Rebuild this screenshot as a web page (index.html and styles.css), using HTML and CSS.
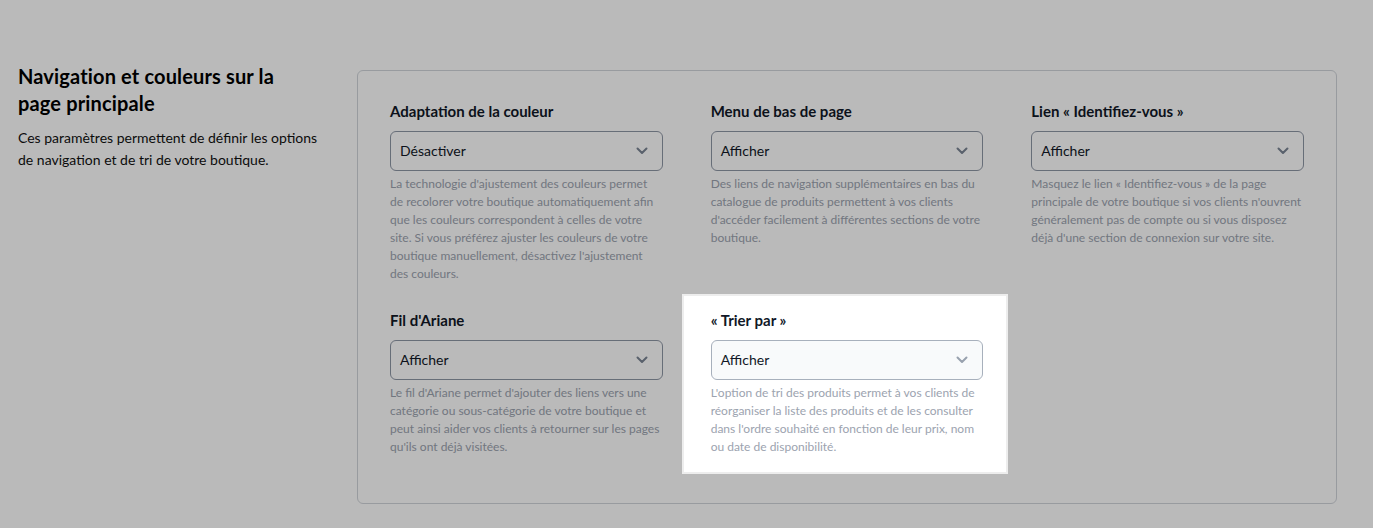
FILE: index.html
```html
<!DOCTYPE html>
<html lang="fr">
<head>
<meta charset="utf-8">
<title>Navigation et couleurs</title>
<link rel="stylesheet" href="styles.css">
</head>
<body>
<div class="page">
  <div class="intro">
    <h2 class="intro-title">Navigation et couleurs sur la page principale</h2>
    <p class="intro-text">Ces paramètres permettent de définir les options de navigation et de tri de votre boutique.</p>
  </div>
  <div class="card">
    <div class="grid">
      <div class="field">
        <div class="field-title">Adaptation de la couleur</div>
        <div class="select"><span>Désactiver</span><svg class="chev" width="12" height="8" viewBox="0 0 12 8"><path d="M1.5 1.5 6 6l4.5-4.5" fill="none" stroke="currentColor" stroke-width="2" stroke-linecap="round" stroke-linejoin="round"/></svg></div>
        <p class="field-desc">La technologie d'ajustement des couleurs permet de recolorer votre boutique automatiquement afin que les couleurs correspondent à celles de votre site. Si vous préférez ajuster les couleurs de votre boutique manuellement, désactivez l'ajustement des couleurs.</p>
      </div>
      <div class="field">
        <div class="field-title">Menu de bas de page</div>
        <div class="select"><span>Afficher</span><svg class="chev" width="12" height="8" viewBox="0 0 12 8"><path d="M1.5 1.5 6 6l4.5-4.5" fill="none" stroke="currentColor" stroke-width="2" stroke-linecap="round" stroke-linejoin="round"/></svg></div>
        <p class="field-desc">Des liens de navigation supplémentaires en bas du catalogue de produits permettent à vos clients d'accéder facilement à différentes sections de votre boutique.</p>
      </div>
      <div class="field">
        <div class="field-title">Lien « Identifiez-vous »</div>
        <div class="select"><span>Afficher</span><svg class="chev" width="12" height="8" viewBox="0 0 12 8"><path d="M1.5 1.5 6 6l4.5-4.5" fill="none" stroke="currentColor" stroke-width="2" stroke-linecap="round" stroke-linejoin="round"/></svg></div>
        <p class="field-desc">Masquez le lien « Identifiez-vous » de la page principale de votre boutique si vos clients n'ouvrent généralement pas de compte ou si vous disposez déjà d'une section de connexion sur votre site.</p>
      </div>
      <div class="field">
        <div class="field-title">Fil d'Ariane</div>
        <div class="select"><span>Afficher</span><svg class="chev" width="12" height="8" viewBox="0 0 12 8"><path d="M1.5 1.5 6 6l4.5-4.5" fill="none" stroke="currentColor" stroke-width="2" stroke-linecap="round" stroke-linejoin="round"/></svg></div>
        <p class="field-desc">Le fil d'Ariane permet d'ajouter des liens vers une catégorie ou sous-catégorie de votre boutique et peut ainsi aider vos clients à retourner sur les pages qu'ils ont déjà visitées.</p>
      </div>
      <div class="field field-spotlight">
        <div class="field-title">« Trier par »</div>
        <div class="select select-light"><span>Afficher</span><svg class="chev" width="12" height="8" viewBox="0 0 12 8"><path d="M1.5 1.5 6 6l4.5-4.5" fill="none" stroke="currentColor" stroke-width="2" stroke-linecap="round" stroke-linejoin="round"/></svg></div>
        <p class="field-desc">L'option de tri des produits permet à vos clients de réorganiser la liste des produits et de les consulter dans l'ordre souhaité en fonction de leur prix, nom ou date de disponibilité.</p>
      </div>
    </div>
  </div>
</div>
</body>
</html>
```
FILE: styles.css
```css
* { box-sizing: border-box; }
html, body { margin: 0; padding: 0; }
body {
  background: #ffffff;
  font-family: Lato, "Noto Sans", sans-serif;
  color: #111827;
  height: 528px;
  overflow: hidden;
}
.page {
  display: flex;
  gap: 37px;
  padding: 63px 36px 0 18px;
}
.intro {
  width: 302px;
  flex: none;
}
.intro-title {
  margin: 0;
  font-size: 20px;
  line-height: 27px;
  font-weight: 700;
  letter-spacing: 0.15px;
  color: #000;
}
.intro-text {
  margin: 10px 0 0;
  font-size: 14px;
  line-height: 22px;
  color: #111;
}
.card {
  flex: 1;
  margin-top: 7px;
  border: 1px solid #d1d5db;
  border-radius: 6px;
  padding: 30px 32px 47px;
  background: #fff;
}
.grid {
  display: grid;
  grid-template-columns: repeat(3, 1fr);
  column-gap: 48px;
  row-gap: 27px;
}
.field { position: relative; }
.field-title {
  font-size: 15px;
  line-height: 20px;
  font-weight: 700;
  color: #111827;
  margin-bottom: 10px;
}
.select {
  height: 40px;
  border: 1px solid #8e97a5;
  border-radius: 6px;
  display: flex;
  align-items: center;
  justify-content: space-between;
  padding: 0 14px 0 9px;
  font-size: 14px;
  color: #111827;
  background: #fff;
}
.select span { position: relative; top: -1px; }
.select-light {
  border-color: #a7b0bc;
  background: #f8fafb;
}
.chev { color: #7b8594; }
.select-light .chev { color: #98a1ae; }
.field-desc {
  margin: 4px 0 0;
  font-size: 12px;
  line-height: 18px;
  color: #9ca3af;
}
.field-spotlight::after {
  content: "";
  position: absolute;
  top: -16px;
  bottom: -18px;
  left: -29px;
  right: -25px;
  border: 2px solid rgba(0, 0, 0, 0.07);
  box-shadow: 0 0 0 3000px rgba(0, 0, 0, 0.27);
  pointer-events: none;
  z-index: 10;
}
```
